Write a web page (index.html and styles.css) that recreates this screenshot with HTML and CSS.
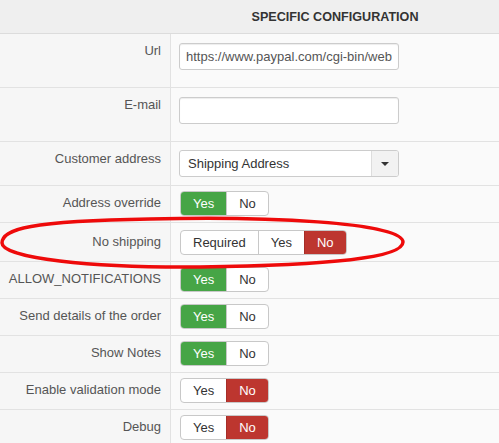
FILE: index.html
```html
<!DOCTYPE html>
<html>
	<head>
		<meta charset="utf-8">
		<title>Payment method</title>
		<link rel="stylesheet" href="styles.css">
	</head>
	<body>
		<div class="wrap">
			<div class="config">
				<div class="head"></div>
				<div class="head head-title">Specific Configuration</div>

				<div class="key">Url</div>
				<div class="val val-text"><input class="text" type="text" value="https://www.paypal.com/cgi-bin/webscr"></div>

				<div class="key">E-mail</div>
				<div class="val val-text"><input class="text" type="text" value=""></div>

				<div class="key">Customer address</div>
				<div class="val val-select">
					<div class="select">
						<span class="select-value">Shipping Address</span>
						<span class="select-arrow"><b></b></span>
					</div>
				</div>

				<div class="key">Address override</div>
				<div class="val"><div class="toggle"><span class="yes">Yes</span><span>No</span></div></div>

				<div class="key key-loose">No shipping</div>
				<div class="val val-loose"><div class="toggle"><span>Required</span><span>Yes</span><span class="no">No</span></div></div>

				<div class="key">ALLOW_NOTIFICATIONS</div>
				<div class="val"><div class="toggle"><span class="yes">Yes</span><span>No</span></div></div>

				<div class="key">Send details of the order</div>
				<div class="val"><div class="toggle"><span class="yes">Yes</span><span>No</span></div></div>

				<div class="key">Show Notes</div>
				<div class="val"><div class="toggle"><span class="yes">Yes</span><span>No</span></div></div>

				<div class="key">Enable validation mode</div>
				<div class="val"><div class="toggle"><span>Yes</span><span class="no">No</span></div></div>

				<div class="key">Debug</div>
				<div class="val"><div class="toggle"><span>Yes</span><span class="no">No</span></div></div>
			</div>

			<!-- red marker round the "No shipping" row -->
			<svg class="mark" width="499" height="443" viewBox="0 0 499 443">
				<path d="M2,243 C2,229 30,221 150,219 C260,216 403,222 403,242 C403,258 330,265 200,267 C90,268 2,258 2,243 Z" fill="none" stroke="#ee0a0a" stroke-width="3.5"/>
			</svg>
		</div>
	</body>
</html>
```

FILE: styles.css
```css
*{margin: 0; padding: 0; box-sizing: border-box;}
body{font-family: "Liberation Sans", Arial, sans-serif; font-size: 13px; line-height: 18px; color: #333; background: #fafafa;}

.wrap{position: relative; width: 499px; height: 443px; overflow: hidden;}
.mark{position: absolute; left: 0; top: 0; pointer-events: none;}

.config{display: grid; grid-template-columns: 171px 1fr;}

.head{background: #efefef; border-bottom: 1px solid #dcdcdc; height: 34px;}
.head-title{padding-top: 8px; text-align: center; font-weight: bold; text-transform: uppercase; color: #333; font-size: 12.6px;}

.key{background: #f6f6f6; border-right: 1px solid #e2e2e2; border-bottom: 1px solid #e2e2e2; padding: 8px 9px 0 0; text-align: right; color: #555;}
.val{background: #fafafa; border-bottom: 1px solid #e2e2e2; padding: 5px 0 6px 9px;}
.key-loose{padding-top: 10px;}
.val-loose{padding-top: 7px; padding-bottom: 6px;}

.val-text{padding: 9px 0 17px 8px;}
.val-select{padding: 8px 0 8px 8px;}

.text{display: block; width: 220px; height: 27px; padding: 0 6px; border: 1px solid #ccc; border-radius: 3px; background: #fff; box-shadow: inset 0 1px 1px rgba(0,0,0,.075); font: 13px "Liberation Sans", Arial, sans-serif; color: #555; outline: none;}

.select{display: flex; width: 220px; height: 27px; border: 1px solid #ccc; border-radius: 3px; background: #fff; overflow: hidden;}
.select-value{flex: 1; padding-left: 8px; line-height: 25px; color: #333;}
.select-arrow{width: 27px; border-left: 1px solid #ddd; background: #f2f2f2; display: flex; align-items: center; justify-content: center;}
.select-arrow b{width: 0; height: 0; border-left: 4px solid transparent; border-right: 4px solid transparent; border-top: 4px solid #333;}

.toggle{display: inline-flex; height: 25px; border: 1px solid #c8c8c8; border-radius: 4px; overflow: hidden; background: #fff;}
.toggle span{padding: 0 12px; line-height: 23px; color: #333; border-left: 1px solid #c8c8c8;}
.toggle span:first-child{border-left: none;}
.toggle .yes{background: #46a546; color: #fff; border-color: #3b8f3b;}
.toggle .no{background: #bd362f; color: #fff; border-color: #a52e28;}
```
